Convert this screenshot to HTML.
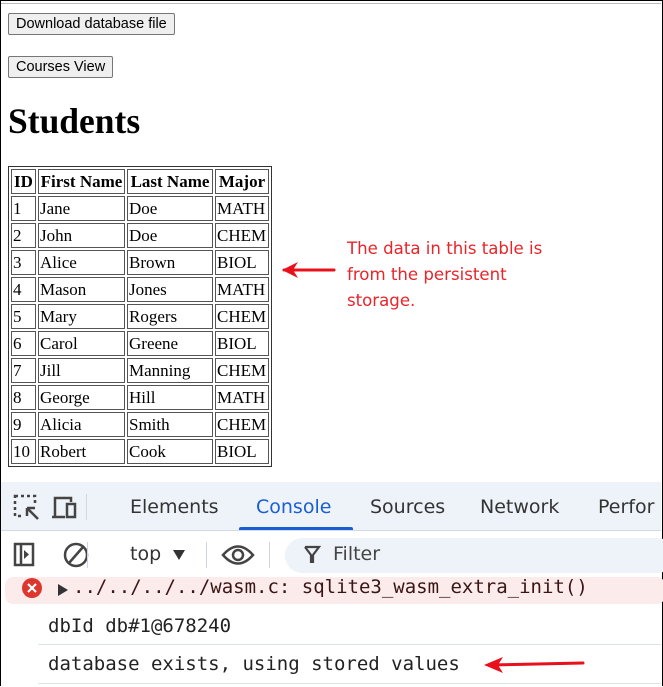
<!DOCTYPE html>
<html><head><meta charset="utf-8"><style>
body{margin:0;width:663px;height:687px;position:relative;overflow:hidden;background:#fff;font-family:"Liberation Serif",serif}
.frame{position:absolute;left:0;top:0;width:661px;height:685px;border:1px solid #000;border-bottom:none}
.gl{position:absolute;left:1px;top:3px;width:660px;height:1px;background:#bbb}
button{position:absolute;font-family:"Liberation Sans",sans-serif;font-size:14.5px;background:#efefef;border:1px solid #767676;border-radius:2px;padding:0 7px;height:22px;line-height:19px;color:#000}
h1{position:absolute;left:8px;top:100px;margin:0;font-size:35.5px;font-weight:bold;line-height:42px}
table{position:absolute;left:8px;top:166px;border:1px solid #333;border-spacing:2px;border-collapse:separate;font-size:17px}
td,th{border:1px solid #555;height:23px;padding:0 1px;text-align:left;white-space:nowrap;line-height:23px}
th{text-align:center}
.note{position:absolute;left:347px;top:236px;color:#e8252a;font-family:"DejaVu Sans",sans-serif;font-size:16.6px;line-height:26px}
.dev{position:absolute;left:1px;top:482px;width:660px;height:205px;background:#fff;font-family:"DejaVu Sans",sans-serif}
.tabs{position:absolute;left:0;top:0;width:660px;height:48px;background:#eef2f9;border-bottom:1px solid #d3dbe8}
.tab{position:absolute;top:14px;font-size:19px;color:#333}
.mono{font-family:"DejaVu Sans Mono","Liberation Mono",monospace;font-size:19px;color:#222}
</style></head><body>
<div class="frame"></div><div class="gl"></div>
<button style="left:8px;top:13px">Download database file</button>
<button style="left:8px;top:56px">Courses View</button>
<h1>Students</h1>
<table>
<tr><th style="width:21px">ID</th><th style="width:83px">First Name</th><th style="width:82px">Last Name</th><th style="width:50px">Major</th></tr>
<tr><td>1</td><td>Jane</td><td>Doe</td><td>MATH</td></tr>
<tr><td>2</td><td>John</td><td>Doe</td><td>CHEM</td></tr>
<tr><td>3</td><td>Alice</td><td>Brown</td><td>BIOL</td></tr>
<tr><td>4</td><td>Mason</td><td>Jones</td><td>MATH</td></tr>
<tr><td>5</td><td>Mary</td><td>Rogers</td><td>CHEM</td></tr>
<tr><td>6</td><td>Carol</td><td>Greene</td><td>BIOL</td></tr>
<tr><td>7</td><td>Jill</td><td>Manning</td><td>CHEM</td></tr>
<tr><td>8</td><td>George</td><td>Hill</td><td>MATH</td></tr>
<tr><td>9</td><td>Alicia</td><td>Smith</td><td>CHEM</td></tr>
<tr><td>10</td><td>Robert</td><td>Cook</td><td>BIOL</td></tr>
</table>
<svg style="position:absolute;left:280px;top:260px" width="60" height="20"><path d="M4 10 L54 10" stroke="#e8101a" stroke-width="3" stroke-linecap="round"/><path d="M2 10 L18 2 L13 10 L18 18 Z" fill="#e8101a"/></svg>
<div class="note">The data in this table is<br>from the persistent<br>storage.</div>
<div class="dev">
<div class="tabs">
<svg style="position:absolute;left:12px;top:12px" width="30" height="28"><rect x="2" y="2" width="20" height="20" fill="none" stroke="#444" stroke-width="2.5" stroke-dasharray="3 3"/><rect x="10" y="10" width="16" height="16" fill="#eef2f9"/><path d="M14 14 L25 25 M14 14 L14 22 M14 14 L22 14" stroke="#444" stroke-width="2.5" fill="none"/></svg>
<svg style="position:absolute;left:50px;top:14px" width="28" height="24"><path d="M4 20 L4 2 L20 2 L20 6" stroke="#444" stroke-width="2.5" fill="none"/><path d="M1 21 L14 21" stroke="#444" stroke-width="2.5"/><rect x="16" y="8" width="8" height="13" fill="none" stroke="#444" stroke-width="2.5"/></svg>
<div style="position:absolute;left:85px;top:12px;width:1px;height:26px;background:#cfd6e2"></div>
<span class="tab" style="left:129px">Elements</span>
<span class="tab" style="left:255px;color:#1a5fd2">Console</span>
<div style="position:absolute;left:238px;top:45px;width:114px;height:3px;background:#1a5fd2;border-radius:2px 2px 0 0"></div>
<span class="tab" style="left:369px">Sources</span>
<span class="tab" style="left:479px">Network</span>
<span class="tab" style="left:597px">Perfor</span>
</div>
<svg style="position:absolute;left:12px;top:60px" width="24" height="26"><rect x="2" y="2" width="18" height="21" fill="none" stroke="#444" stroke-width="2.5"/><path d="M8 2 L8 23" stroke="#444" stroke-width="2.5"/><path d="M11 8 L16 12.5 L11 17 Z" fill="#444"/></svg>
<svg style="position:absolute;left:62px;top:59px" width="28" height="28"><circle cx="13" cy="14" r="11" fill="none" stroke="#444" stroke-width="2.5"/><path d="M6 22 L20 6" stroke="#444" stroke-width="2.5"/></svg>
<div style="position:absolute;left:86px;top:60px;width:1px;height:26px;background:#cfd6e2"></div>
<span style="position:absolute;left:129px;top:61px;font-size:19px;color:#333">top</span>
<svg style="position:absolute;left:171px;top:67px" width="14" height="12"><path d="M1 1 L13 1 L7 11 Z" fill="#333"/></svg>
<div style="position:absolute;left:205px;top:60px;width:1px;height:26px;background:#cfd6e2"></div>
<svg style="position:absolute;left:220px;top:60px" width="34" height="26"><path d="M2 13 Q17 -4 32 13 Q17 30 2 13 Z" fill="none" stroke="#444" stroke-width="2.5"/><circle cx="17" cy="13" r="5" fill="none" stroke="#444" stroke-width="2.5"/></svg>
<div style="position:absolute;left:268px;top:60px;width:1px;height:26px;background:#cfd6e2"></div>
<div style="position:absolute;left:284px;top:56px;width:390px;height:35px;border-radius:18px;background:#eef2f9"></div>
<svg style="position:absolute;left:302px;top:63px" width="18" height="20"><path d="M2 2 L16 2 L10 10 L10 18 M2 2 L8 10 L8 18" stroke="#444" stroke-width="2.2" fill="none"/></svg>
<span style="position:absolute;left:332px;top:61px;font-size:19px;color:#444">Filter</span>
<div style="position:absolute;left:4px;top:95px;width:660px;height:27px;background:#fcebeb;border-radius:8px"></div>
<svg style="position:absolute;left:20px;top:95px" width="22" height="22"><circle cx="11" cy="11" r="10" fill="#dc362e"/><path d="M7 7 L15 15 M15 7 L7 15" stroke="#fff" stroke-width="2.2"/></svg>
<svg style="position:absolute;left:56px;top:101px" width="12" height="14"><path d="M1 1 L11 7 L1 13 Z" fill="#333"/></svg>
<span class="mono" style="position:absolute;left:72px;top:94px;color:#3a1515">../../../../wasm.c: sqlite3_wasm_extra_init()</span>
<span class="mono" style="position:absolute;left:47px;top:133px">dbId db#1@678240</span>
<div style="position:absolute;left:37px;top:162px;width:623px;height:1px;background:#dde3ee"></div>
<span class="mono" style="position:absolute;left:47px;top:171px">database exists, using stored values</span>
<div style="position:absolute;left:37px;top:201px;width:623px;height:1px;background:#dde3ee"></div>
<svg style="position:absolute;left:482px;top:173px" width="106" height="20"><path d="M6 10 L100 8" stroke="#e8101a" stroke-width="3" stroke-linecap="round"/><path d="M1 10 L20 2 L15 10 L20 18 Z" fill="#e8101a"/></svg>
</div>
</body></html>
